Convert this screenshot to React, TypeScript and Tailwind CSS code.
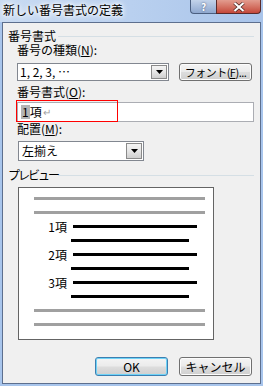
import React from "react";

const font = { fontFamily: '"Noto Sans CJK JP", "Noto Sans", sans-serif' };

function Arrow() {
  return (
    <svg width="7" height="4" viewBox="0 0 7 4">
      <path d="M0 0 H7 L3.5 4 Z" fill="#000" />
    </svg>
  );
}

function DropBtn() {
  return (
    <div className="w-[16px] h-full flex items-center justify-center border border-[#8a8a8a] bg-gradient-to-b from-[#f4f4f4] via-[#e6e6e6] to-[#cfcfcf]">
      <Arrow />
    </div>
  );
}

function Btn({ children, def }: { children: React.ReactNode; def?: boolean }) {
  return (
    <div
      className={
        "w-[73px] h-[19px] rounded-[3px] border flex items-center justify-center whitespace-nowrap text-[12px] leading-[12px] text-black bg-[linear-gradient(#f4f4f4_0%,#ebebeb_48%,#dddddd_52%,#cfcfcf_100%)] " +
        (def
          ? "border-[#3c7fb1] shadow-[inset_0_0_0_1px_#6fd3f7]"
          : "border-[#707070] shadow-[inset_0_0_0_1px_#fcfcfc]")
      }
    >
      {children}
    </div>
  );
}

function PLine({ w, c, ml }: { w: number; c: string; ml: number }) {
  return (
    <div className="h-[14px] flex items-start">
      <div style={{ width: w, marginLeft: ml, background: c }} className="h-[3px] mt-[5px]" />
    </div>
  );
}

function PItem({ n }: { n: number }) {
  return (
    <>
      <div className="h-[14px] flex items-start">
        <div className="w-[54px] h-[14px] text-right pr-[6px] text-[12px] leading-[14px] text-black whitespace-nowrap">
          {n}項
        </div>
        <div className="w-[124px] h-[3px] mt-[5px] bg-black" />
      </div>
      <div className="h-[14px] flex items-start">
        <div className="w-[118px] h-[3px] mt-[5px] ml-[52px] bg-black" />
      </div>
    </>
  );
}

export default function App() {
  return (
    <div
      style={font}
      className="w-[263px] h-[386px] bg-[#a8c5ec] flex flex-col overflow-hidden text-[12px] text-black"
    >
      {/* title bar */}
      <div className="h-[22px] flex items-start justify-between bg-[linear-gradient(90deg,#c9dbf2_0%,#b9d0ef_50%,#a9c4ea_100%)]">
        <div className="pl-[3px] pt-[2px] text-[12px] leading-[16px] text-black whitespace-nowrap [text-shadow:0_0_6px_#ffffff,0_0_6px_#ffffff,0_0_3px_#ffffff]">
          新しい番号書式の定義
        </div>
        <div className="flex mr-[2px]">
          <div className="w-[26px] h-[14px] rounded-bl-[4px] border border-[#4b5f80] border-t-0 border-r-0 bg-gradient-to-b from-[#c3d3ea] to-[#8fa8cf] flex items-center justify-center text-white font-bold text-[10px] leading-[13px] [text-shadow:0_0_2px_#3a4a6a]">
            ?
          </div>
          <div className="w-[45px] h-[14px] rounded-br-[4px] border border-[#5a2a2a] border-t-0 bg-gradient-to-b from-[#e29c8f] to-[#c4473a] flex items-center justify-center">
            <svg width="12" height="10" viewBox="0 0 12 10">
              <path d="M1.5 1 L10.5 9 M10.5 1 L1.5 9" stroke="#3d1a16" strokeWidth="3.4" />
              <path d="M1.5 1 L10.5 9 M10.5 1 L1.5 9" stroke="#fff" strokeWidth="2.2" />
            </svg>
          </div>
        </div>
      </div>

      {/* client */}
      <div className="mx-[2px] mb-[2px] flex-1 border border-[#5d6f8e] bg-[#f0f0f0] flex flex-col">
        {/* group heading */}
        <div className="mt-[6px] h-[14px] flex items-center">
          <div className="w-[55px] pl-[5px] leading-[14px] whitespace-nowrap">番号書式</div>
          <div className="flex-1 h-px bg-[#d5dfe5] mr-[6px]" />
        </div>

        <div className="h-[14px] pl-[14px] leading-[14px] whitespace-nowrap">
          番号の種類(<span className="underline">N</span>):
        </div>

        <div className="mt-[6px] h-[18px] flex pl-[14px]">
          <div className="w-[152px] h-[18px] bg-white border border-[#828790] flex items-center justify-between pl-[2px] pr-px py-px">
            <span className="leading-[14px] whitespace-nowrap">1, 2, 3, …</span>
            <DropBtn />
          </div>
          <div className="ml-[10px]">
            <div className="w-[73px] h-[18px] rounded-[3px] border border-[#707070] shadow-[inset_0_0_0_1px_#fcfcfc] flex items-center justify-center whitespace-nowrap text-[11px] tracking-[-0.5px] leading-[12px] bg-[linear-gradient(#f4f4f4_0%,#ebebeb_48%,#dddddd_52%,#cfcfcf_100%)]">
              フォント(<span className="underline">F</span>)...
            </div>
          </div>
        </div>

        <div className="mt-[4px] h-[14px] pl-[14px] leading-[14px] whitespace-nowrap">
          番号書式(<span className="underline">O</span>):
        </div>

        <div className="mt-[3px] pl-[14px] flex">
          <div className="relative w-[237px] h-[20px] bg-white border border-[#abadb3] flex items-center pl-[3px]">
            <span className="bg-[#b4b4b4] leading-[14px] px-px">1</span>
            <span className="leading-[14px]">項</span>
            <span className="text-[#a0a0a0] text-[10px] leading-[14px] ml-px">↵</span>
            <div className="absolute left-[-2px] top-[-3px] w-[102px] h-[22px] border border-[#ff0000]" />
          </div>
        </div>

        <div className="h-[14px] pl-[14px] leading-[14px] whitespace-nowrap">
          配置(<span className="underline">M</span>):
        </div>

        <div className="mt-[5px] pl-[15px] flex">
          <div className="w-[126px] h-[20px] bg-white border border-[#828790] flex items-center justify-between pl-[3px] pr-px py-px">
            <span className="leading-[14px] whitespace-nowrap">左揃え</span>
            <DropBtn />
          </div>
        </div>

        <div className="mt-[7px] h-[14px] flex items-center">
          <div className="w-[55px] pl-[5px] leading-[14px] whitespace-nowrap tracking-[-2px]">プレビュー</div>
          <div className="flex-1 h-px bg-[#d5dfe5] mr-[6px]" />
        </div>

        <div className="mt-[5px] pl-[15px] flex">
          <div className="w-[196px] h-[153px] bg-white border border-[#646464] pt-[4px]">
            <PLine w={171} c="#a0a0a0" ml={15} />
            <PLine w={171} c="#a0a0a0" ml={15} />
            <PItem n={1} />
            <PItem n={2} />
            <PItem n={3} />
            <PLine w={171} c="#a0a0a0" ml={15} />
            <PLine w={171} c="#a0a0a0" ml={15} />
          </div>
        </div>

        <div className="mt-[17px] flex pl-[92px] gap-[11px]">
          <Btn def>OK</Btn>
          <Btn>キャンセル</Btn>
        </div>
      </div>
    </div>
  );
}
